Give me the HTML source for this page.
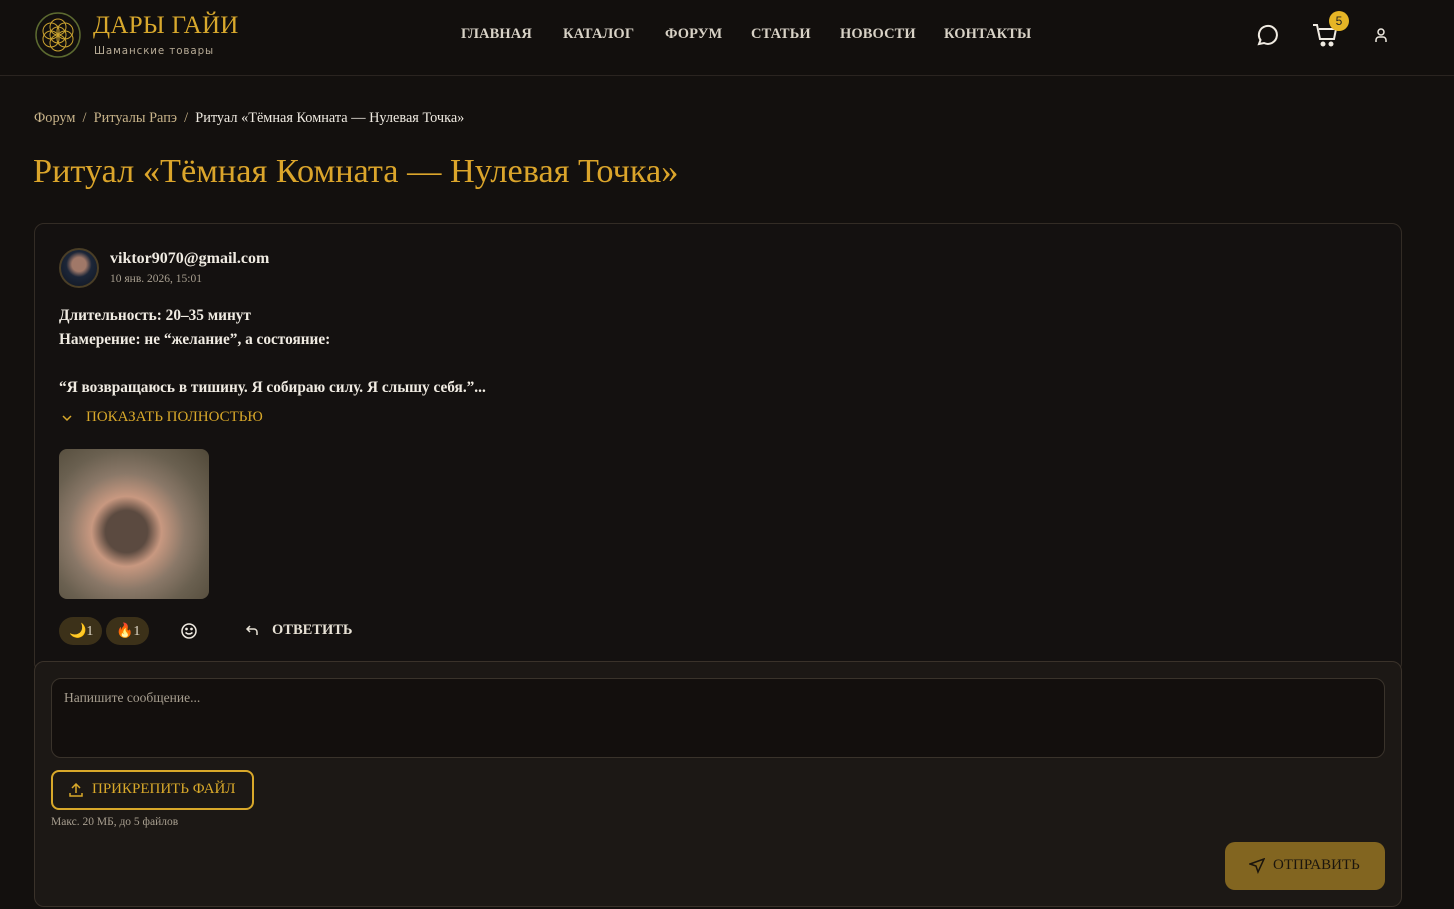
<!DOCTYPE html>
<html><head><meta charset="utf-8"><style>
*{box-sizing:border-box;margin:0;padding:0}
body{width:1454px;height:909px;overflow:hidden;background:#13100e;font-family:"Liberation Serif",serif;color:#e8e2d6;position:relative}
.hdr{position:absolute;left:0;top:0;width:1454px;height:76px;border-bottom:1px solid #2a2420;background:#120f0d}
.logo{position:absolute;left:34px;top:11px}
.brand{position:absolute;left:93px;top:12px;color:#d9a92d;font-size:25px;letter-spacing:.3px}
.sub{position:absolute;left:94px;top:45px;color:#b7ab96;font-family:"DejaVu Sans",sans-serif;font-size:10.3px;letter-spacing:.9px}
.nav{position:absolute;top:26px;font-size:14.5px;font-weight:bold;color:#d8d2c6;letter-spacing:.1px}
.crumb{position:absolute;left:34px;top:110px;font-size:14.3px;color:#c9b48a}
.crumb b{color:#f0ebe2;font-weight:normal}
h1{position:absolute;left:33px;top:152px;font-size:34.3px;font-weight:normal;color:#dba52b}
.card{position:absolute;left:34px;top:223px;width:1368px;height:450px;border:1px solid #332c25;border-radius:10px;background:#141110}
.txt{position:absolute;left:59px;font-size:15.3px;font-weight:bold;color:#f0ebe2}
.comp{position:absolute;left:34px;top:661px;width:1368px;height:246px;border:1px solid #3a322a;border-radius:10px;background:#1c1815}
.ta{position:absolute;left:16px;top:16px;width:1334px;height:80px;border:1px solid #3a332b;border-radius:10px;background:#130f0d;padding:11px 12px;font-size:13.5px;color:#a89f90}
.att{position:absolute;left:16px;top:108px;width:203px;height:40px;border:2px solid #d8a82a;border-radius:8px;color:#d8a82a;font-size:15px;padding:9px 0 0 39px}
.send{position:absolute;left:1190px;top:180px;width:160px;height:48px;background:#826520;border-radius:10px;color:#1b150d;font-size:15px;padding:15px 0 0 48px}
.pill{position:absolute;top:617px;height:28px;border-radius:14px;background:#3c3119;font-size:14px;color:#e0d8c8;padding:6px 0 0 0}
</style></head><body>
<div class="hdr">
<svg class="logo" width="48" height="48" viewBox="0 0 48 48" fill="none" stroke="#c9a230" stroke-width="1"><circle cx="24" cy="24" r="22" stroke="#5c6a30" stroke-width="1.5"/><circle cx="24" cy="24" r="8"/><circle cx="24" cy="16" r="8"/><circle cx="24" cy="32" r="8"/><circle cx="17" cy="20" r="8"/><circle cx="31" cy="20" r="8"/><circle cx="17" cy="28" r="8"/><circle cx="31" cy="28" r="8"/></svg>
<div class="brand">ДАРЫ ГАЙИ</div>
<div class="sub">Шаманские товары</div>
<div class="nav" style="left:461px">ГЛАВНАЯ</div>
<div class="nav" style="left:563px">КАТАЛОГ</div>
<div class="nav" style="left:665px">ФОРУМ</div>
<div class="nav" style="left:751px">СТАТЬИ</div>
<div class="nav" style="left:840px">НОВОСТИ</div>
<div class="nav" style="left:944px">КОНТАКТЫ</div>
<svg style="position:absolute;left:1256px;top:23px" width="24" height="24" viewBox="0 0 24 24" fill="none" stroke="#f0ebe2" stroke-width="2"><path d="M3 21l1.5-4A9 9 0 1 1 8 20z"/></svg>
<svg style="position:absolute;left:1312px;top:23px" width="28" height="24" viewBox="0 0 28 24" fill="none" stroke="#f0ebe2" stroke-width="2"><path d="M1 2h4l3 14h14l2-10H7"/><circle cx="11" cy="21" r="1.5" fill="#f0ebe2"/><circle cx="19" cy="21" r="1.5" fill="#f0ebe2"/></svg>
<div style="position:absolute;left:1329px;top:11px;width:20px;height:20px;border-radius:50%;background:#e6b526;color:#222;font-size:12px;text-align:center;line-height:20px;font-family:'Liberation Sans',sans-serif">5</div>
<svg style="position:absolute;left:1373px;top:27px" width="16" height="16" viewBox="0 0 16 16" fill="none" stroke="#f0ebe2" stroke-width="1.5"><circle cx="8" cy="5" r="3"/><path d="M3 15v-2a3 3 0 0 1 3-3h4a3 3 0 0 1 3 3v2"/></svg>
</div>
<div class="crumb">Форум &nbsp;/&nbsp; Ритуалы Рапэ &nbsp;/&nbsp; <b>Ритуал «Тёмная Комната — Нулевая Точка»</b></div>
<h1>Ритуал «Тёмная Комната — Нулевая Точка»</h1>
<div class="card"></div>
<div style="position:absolute;left:59px;top:248px;width:40px;height:40px;border-radius:50%;border:2px solid #4a3e26;background:radial-gradient(circle at 50% 40%,#a07868 0 25%,#1c2638 45%,#0e1420)"></div>
<div style="position:absolute;left:110px;top:250px;font-size:16px;font-weight:bold;color:#f0ebe2">viktor9070@gmail.com</div>
<div style="position:absolute;left:110px;top:273px;font-size:11.5px;color:#a89f90">10 янв. 2026, 15:01</div>
<div class="txt" style="top:307px">Длительность: 20–35 минут</div>
<div class="txt" style="top:331px">Намерение: не “желание”, а состояние:</div>
<div class="txt" style="top:379px">“Я возвращаюсь в тишину. Я собираю силу. Я слышу себя.”...</div>
<svg style="position:absolute;left:62px;top:414px" width="10" height="8" viewBox="0 0 10 8" fill="none" stroke="#d8a82a" stroke-width="1.5"><path d="M1 2l4 4 4-4"/></svg>
<div style="position:absolute;left:86px;top:409px;font-size:15px;color:#d8a82a">ПОКАЗАТЬ ПОЛНОСТЬЮ</div>
<div style="position:absolute;left:59px;top:449px;width:150px;height:150px;border-radius:8px;background:radial-gradient(ellipse at 45% 55%,#5b4a40 0 18%,#c89880 30%,#8a7868 50%,#6a6050 70%,#504838)"></div>
<div class="pill" style="left:59px;width:43px;padding-left:10px">🌙1</div>
<div class="pill" style="left:106px;width:43px;padding-left:10px">🔥1</div>
<svg style="position:absolute;left:180px;top:622px" width="18" height="18" viewBox="0 0 18 18" fill="none" stroke="#f0ebe2" stroke-width="1.5"><circle cx="9" cy="9" r="7"/><circle cx="6.5" cy="7" r=".6" fill="#f0ebe2"/><circle cx="11.5" cy="7" r=".6" fill="#f0ebe2"/><path d="M5.5 10.5q3.5 3 7 0"/></svg>
<svg style="position:absolute;left:245px;top:624px" width="14" height="12" viewBox="0 0 14 12" fill="none" stroke="#e8e2d6" stroke-width="1.5"><path d="M5 2L2 5l3 3M2 5h7a3 3 0 0 1 3 3v3"/></svg>
<div style="position:absolute;left:272px;top:622px;font-size:14.5px;font-weight:bold;color:#e8e2d6">ОТВЕТИТЬ</div>
<div class="comp">
<div class="ta">Напишите сообщение...</div>
<div class="att"><svg style="position:absolute;left:16px;top:11px" width="14" height="14" viewBox="0 0 14 14" fill="none" stroke="#d8a82a" stroke-width="1.5"><path d="M7 10V1M3 5l4-4 4 4M1 10v3h12v-3"/></svg>ПРИКРЕПИТЬ ФАЙЛ</div>
<div style="position:absolute;left:16px;top:154px;font-size:11.5px;color:#a89f90">Макс. 20 МБ, до 5 файлов</div>
<div class="send"><svg style="position:absolute;left:24px;top:16px" width="16" height="16" viewBox="0 0 16 16" fill="none" stroke="#1b150d" stroke-width="1.5"><path d="M15 1L1 6l6 2 2 6z"/></svg>ОТПРАВИТЬ</div>
</div>
</body></html>
